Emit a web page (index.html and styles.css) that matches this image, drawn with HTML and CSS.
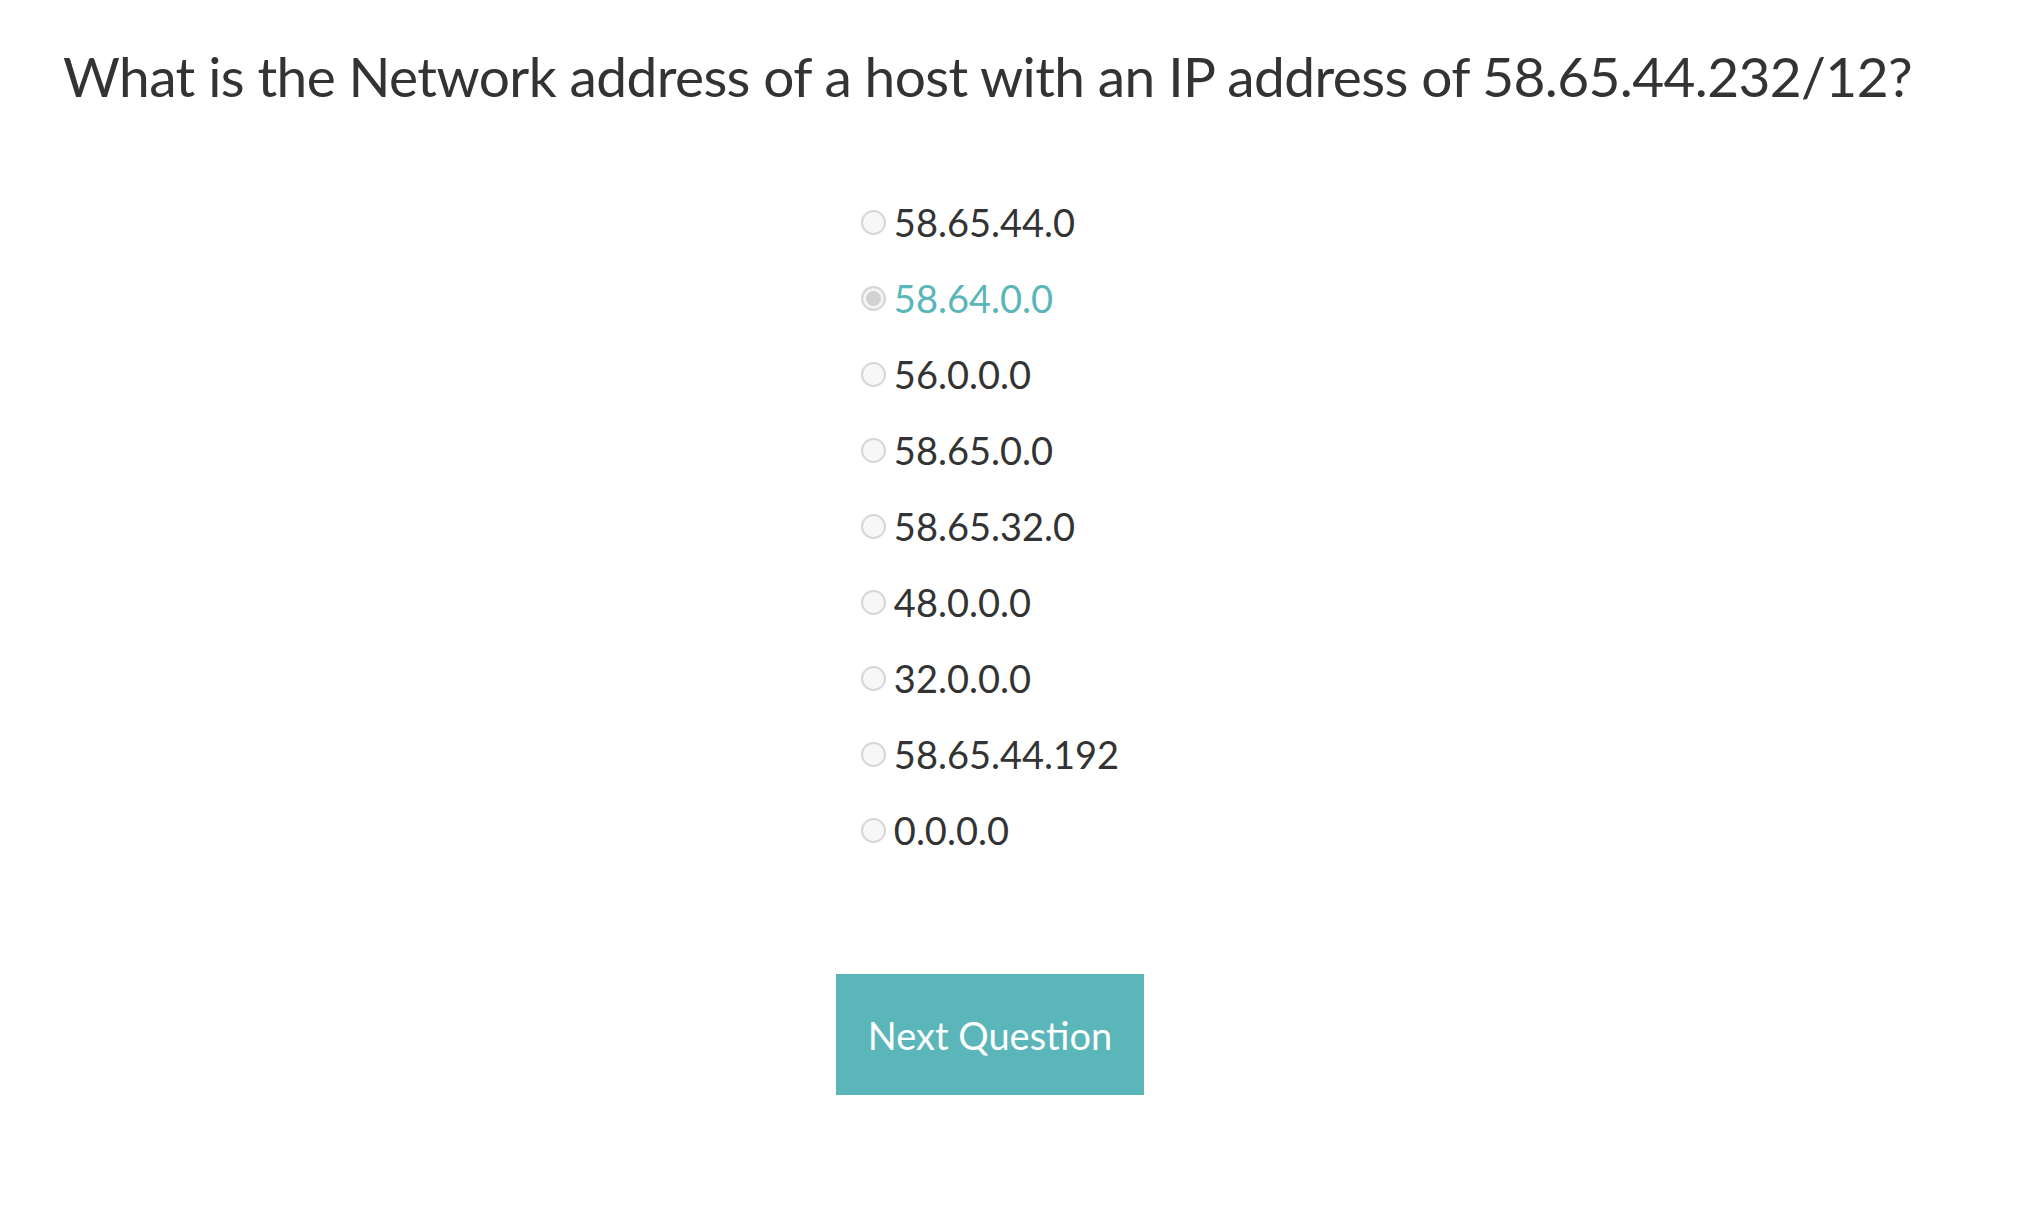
FILE: index.html
```html
<!DOCTYPE html>
<html lang="en">
<head>
<meta charset="utf-8">
<title>Quiz</title>
<link rel="stylesheet" href="styles.css">
</head>
<body>
<main class="quiz">
  <h1 class="question">What is the Network address of a host with an IP address of 58.65.44.232/12?</h1>
  <form class="answers">
    <ul class="options">
      <li><label class="option"><input type="radio" name="a"><span>58.65.44.0</span></label></li>
      <li><label class="option selected"><input type="radio" name="a" checked><span>58.64.0.0</span></label></li>
      <li><label class="option"><input type="radio" name="a"><span>56.0.0.0</span></label></li>
      <li><label class="option"><input type="radio" name="a"><span>58.65.0.0</span></label></li>
      <li><label class="option"><input type="radio" name="a"><span>58.65.32.0</span></label></li>
      <li><label class="option"><input type="radio" name="a"><span>48.0.0.0</span></label></li>
      <li><label class="option"><input type="radio" name="a"><span>32.0.0.0</span></label></li>
      <li><label class="option"><input type="radio" name="a"><span>58.65.44.192</span></label></li>
      <li><label class="option"><input type="radio" name="a"><span>0.0.0.0</span></label></li>
    </ul>
    <button type="button" class="next">Next Question</button>
  </form>
</main>
</body>
</html>
```
FILE: styles.css
```css
html, body {
  margin: 0;
  padding: 0;
  background: #fff;
}
body {
  font-family: Lato, "Open Sans", sans-serif;
  color: #333;
}
.quiz {
  width: 1980px;
  display: flex;
  flex-direction: column;
}
.question {
  margin: 0;
  padding: 36px 0 0 63px;
  font-size: 55px;
  font-weight: 400;
  line-height: 80px;
  letter-spacing: -0.6px;
  color: #333;
}
.answers {
  display: flex;
  flex-direction: column;
  align-items: center;
  padding-top: 68px;
}
.options {
  list-style: none;
  margin: 0;
  padding: 0;
  display: flex;
  flex-direction: column;
}
.option {
  display: flex;
  align-items: center;
  height: 76px;
  gap: 8px;
  font-size: 38px;
  color: #333;
  cursor: pointer;
}
.option.selected {
  color: #5ab6b9;
}
.option input {
  appearance: none;
  -webkit-appearance: none;
  margin: 0;
  width: 25px;
  height: 25px;
  border-radius: 50%;
  border: 2px solid #d6d6d6;
  background: #f7f7f7;
  box-sizing: border-box;
  flex: none;
}
.option input:checked {
  background: #d2d2d2;
  box-shadow: inset 0 0 0 3px #f4f4f4;
}
.next {
  margin-top: 106px;
  width: 308px;
  height: 121px;
  border: none;
  border-radius: 0;
  background: #5ab6b9;
  color: #fff;
  font-family: Lato, "Open Sans", sans-serif;
  font-size: 38px;
  font-weight: 400;
  padding: 0;
}
```
